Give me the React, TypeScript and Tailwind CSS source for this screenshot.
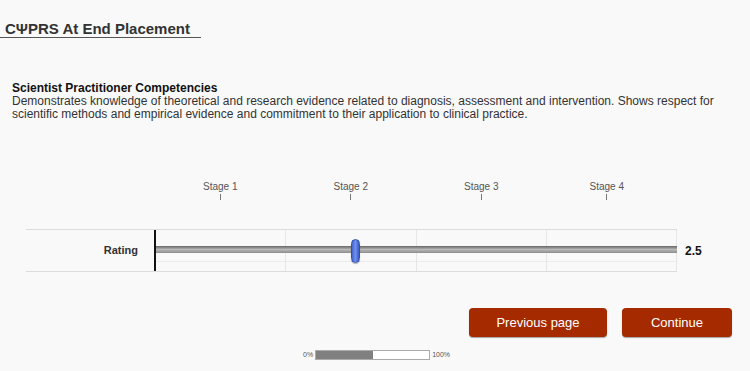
import React from 'react';

const stages = ['Stage 1', 'Stage 2', 'Stage 3', 'Stage 4'];

const App = () => {
  const value = 2.5;

  return (
    <div className="min-h-[371px] w-[750px] bg-[#f9f9f9] font-['Liberation_Sans',Arial,sans-serif] text-[#333]">
      {/* Title */}
      <div className="pt-[17px]">
        <h1 className="inline-block w-[201px] border-b-[1.5px] border-[#555] pl-[5px] text-[15px] font-bold leading-[16px] text-[#333]">
          CΨPRS At End Placement
        </h1>
      </div>

      {/* Competency */}
      <div className="mt-[41px] w-[735px] px-[12px]">
        <h2 className="text-[12px] font-bold leading-[13px] text-[#111]">Scientist Practitioner Competencies</h2>
        <p className="text-[12px] leading-[13px] text-[#333]">
          Demonstrates knowledge of theoretical and research evidence related to diagnosis, assessment and intervention. Shows respect for scientific methods and empirical evidence and commitment to their application to clinical practice.
        </p>
      </div>

      {/* Stage labels */}
      <div className="ml-[155px] mt-[60px] grid w-[522px] grid-cols-4">
        {stages.map((s, i) => (
          <div key={s} className={`flex flex-col items-center ${i === 3 ? 'pr-[10px]' : ''}`}>
            <span className="text-[10px] leading-[11px] text-[#555]">{s}</span>
            <span className="mt-[2px] h-[6px] w-px bg-[#777]" />
          </div>
        ))}
      </div>

      {/* Rating row */}
      <div className="mt-[29px] flex items-center">
        <div className="ml-[26px] flex h-[43px] w-[651px] border-y border-[#dcdcdc]">
          <div className="flex w-[128px] items-center justify-end pr-[16px] text-[11px] font-bold text-[#333]">
            Rating
          </div>
          <div className="relative flex-1 border-l-2 border-[#111]">
            <div className="grid h-full grid-cols-4">
              {stages.map((s) => (
                <div key={s} className="flex flex-col border-r border-[#e6e6e6]">
                  <div className="flex-1" />
                  <div className="h-[10px] border-t border-[#ebebeb]" />
                </div>
              ))}
            </div>
            {/* track */}
            <div className="absolute left-0 right-0 top-[16px] h-[7px] bg-gradient-to-b from-[#666] via-[#b8b8b8] to-[#8c8c8c]" />
            {/* handle */}
            <div className="absolute left-[195px] top-[9px] h-[24px] w-[9px] rounded-full border border-[#2f4fae] bg-gradient-to-r from-[#4466cc] via-[#6e90ee] to-[#3b5bc0] shadow-[0_1px_1px_rgba(0,0,0,0.3)]" />
          </div>
        </div>
        <span className="ml-[8px] text-[12px] font-bold text-[#111]">{value}</span>
      </div>

      {/* Buttons */}
      <div className="mt-[36px] flex justify-end gap-[15px] pr-[18px]">
        <button className="h-[29px] w-[138px] rounded-[4px] bg-[#a52a00] text-[13px] text-white shadow-[0_1px_1px_rgba(0,0,0,0.35)]">
          Previous page
        </button>
        <button className="h-[29px] w-[110px] rounded-[4px] bg-[#a52a00] text-[13px] text-white shadow-[0_1px_1px_rgba(0,0,0,0.35)]">
          Continue
        </button>
      </div>

      {/* Progress */}
      <div className="ml-[303px] mt-[13px] flex items-center gap-[2px] text-[7px] text-[#555]">
        <span>0%</span>
        <div className="h-[10px] w-[115px] border border-[#aaa] bg-white">
          <div className="h-full w-[50%] bg-[#808080]" />
        </div>
        <span>100%</span>
      </div>
    </div>
  );
};

export default App;
